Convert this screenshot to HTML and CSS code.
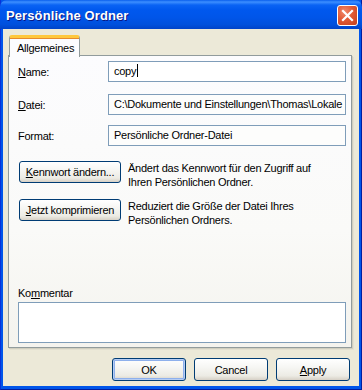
FILE: index.html
```html
<!DOCTYPE html>
<html lang="de">
<head>
<meta charset="utf-8">
<title>Persönliche Ordner</title>
<link rel="stylesheet" href="styles.css">
</head>
<body>
<div class="window">
  <div class="titlebar">
    <span class="title">Persönliche Ordner</span>
    <div class="close" aria-label="Schließen">
      <svg width="13" height="13" viewBox="0 0 13 13"><path d="M2 2 L11 11 M11 2 L2 11" stroke="#fff" stroke-width="2.2" stroke-linecap="square"/></svg>
    </div>
  </div>
  <div class="client">
    <div class="tabs">
      <div class="tab active">Allgemeines</div>
    </div>
    <div class="panel">
      <div class="row row-name">
        <span class="label"><u>N</u>ame:</span>
        <div class="field white">copy<span class="caret"></span></div>
      </div>
      <div class="row row-datei">
        <span class="label"><u>D</u>atei:</span>
        <div class="field ro">C:\Dokumente und Einstellungen\Thomas\Lokale</div>
      </div>
      <div class="row row-format">
        <span class="label">Format:</span>
        <div class="field ro">Persönliche Ordner-Datei</div>
      </div>
      <div class="action action-first">
        <div class="btn wide"><u>K</u>ennwort ändern...</div>
        <p class="desc">Ändert das Kennwort für den Zugriff auf Ihren Persönlichen Ordner.</p>
      </div>
      <div class="action">
        <div class="btn wide"><u>J</u>etzt komprimieren</div>
        <p class="desc">Reduziert die Größe der Datei Ihres Persönlichen Ordners.</p>
      </div>
      <div class="spacer"></div>
      <span class="label comment-label">Ko<u>m</u>mentar</span>
      <div class="textarea"></div>
    </div>
    <div class="buttons">
      <div class="btn dlg default">OK</div>
      <div class="btn dlg">Cancel</div>
      <div class="btn dlg"><u>A</u>pply</div>
    </div>
  </div>
</div>
</body>
</html>
```

FILE: styles.css
```css
html, body {
  margin: 0;
  padding: 0;
  background: #ECE9D8;
}
body {
  width: 362px;
  height: 390px;
  overflow: hidden;
  font-family: "Liberation Sans", Arial, sans-serif;
  font-size: 11px;
  letter-spacing: -0.25px;
  color: #000;
}
u { text-decoration: underline; text-underline-offset: 1px; }

.window {
  width: 362px;
  height: 390px;
  box-sizing: border-box;
  display: flex;
  flex-direction: column;
  background: #0055EA;
  border-left: 1px solid #0831D9;
  border-right: 1px solid #001EA0;
  border-bottom: 1px solid #001EA0;
}

.titlebar {
  height: 29px;
  flex: none;
  display: flex;
  align-items: center;
  justify-content: space-between;
  padding: 0 4px 0 6px;
  background: linear-gradient(#0A5FED 0, #3D8FFF 2px, #0A63F4 5px, #0058EE 10px, #0055E9 60%, #0050DC 85%, #0043C8 100%);
  border-radius: 7px 7px 0 0;
  margin: 0 -1px;
}
.title {
  color: #fff;
  font-weight: bold;
  font-size: 13px;
  letter-spacing: 0.1px;
  text-shadow: 1px 1px 0 #0A1883;
  margin-top: 1px;
}
.close {
  width: 19px;
  height: 19px;
  border: 1px solid #fff;
  border-radius: 3px;
  background: radial-gradient(circle at 35% 30%, #F08A6C 0, #E25A35 45%, #C4401C 100%);
  display: flex;
  align-items: center;
  justify-content: center;
  margin-top: 1px;
}

.client {
  flex: 1;
  display: flex;
  flex-direction: column;
  background: #ECE9D8;
  margin: 0 2px 3px 2px;
  padding: 6px 5px 0 5px;
}

.tabs {
  display: flex;
  padding-left: 1px;
  height: 20px;
  position: relative;
  z-index: 1;
}
.tab {
  width: 71px;
  box-sizing: border-box;
  padding: 4px 0 0 7px;
  background: #FCFCFE;
  border: 1px solid #919B9C;
  border-bottom: none;
  border-top: 3px solid #FFC83C;
  border-radius: 3px 3px 0 0;
  height: 22px;
  box-shadow: inset 0 1px 0 #E68B2C;
}

.panel {
  height: 293px;
  box-sizing: border-box;
  border: 1px solid #919B9C;
  background: linear-gradient(#FCFCFE 0%, #FAFAF8 60%, #F4F3EE 100%);
  box-shadow: 1px 1px 0 #D0CEBF, 2px 2px 0 #E3E0D0;
  margin-right: 2px;
  display: flex;
  flex-direction: column;
  padding: 5px 5px 4px 9px;
}

.row {
  display: flex;
  align-items: center;
  height: 21px;
}
.row-datei { margin-top: 12px; }
.row-format { margin-top: 10px; }
.label {
  width: 90px;
  flex: none;
}
.field {
  flex: 1;
  height: 21px;
  box-sizing: border-box;
  border: 1px solid #7F9DB9;
  padding: 0 3px 0 5px;
  line-height: 19px;
  white-space: nowrap;
  overflow: hidden;
  background: #fff;
}
.field.ro { background: #FDFDFC; }
.caret {
  display: inline-block;
  width: 1px;
  height: 13px;
  background: #000;
  vertical-align: -2px;
  margin-left: 1px;
}

.action {
  display: flex;
  align-items: flex-start;
}
.action-first { margin-top: 15px; }
.action + .action { margin-top: 10px; }
.desc {
  margin: 0 0 0 7px;
  line-height: 14px;
  width: 198px;
}

.btn {
  box-sizing: border-box;
  height: 22px;
  border: 1px solid #003C74;
  border-radius: 3px;
  background: linear-gradient(#FFFFFF 0%, #F6F6F3 40%, #ECEBE4 80%, #D6D0C5 100%);
  display: flex;
  align-items: center;
  justify-content: center;
  white-space: nowrap;
  flex: none;
}
.btn.wide {
  width: 102px;
  margin-left: 1px;
}

.spacer { flex: 1; }
.comment-label {
  margin-left: 0;
  margin-bottom: 2px;
  line-height: 13px;
}
.textarea {
  height: 41px;
  box-sizing: border-box;
  border: 1px solid #7F9DB9;
  background: #fff;
}

.buttons {
  display: flex;
  justify-content: flex-end;
  gap: 8px;
  padding: 10px 4px 0 0;
}
.btn.dlg {
  width: 74px;
  height: 23px;
}
.btn.default {
  box-shadow: inset 0 0 0 1px #B6CDF4, inset 0 0 0 2px #8EB0EC;
}
```
